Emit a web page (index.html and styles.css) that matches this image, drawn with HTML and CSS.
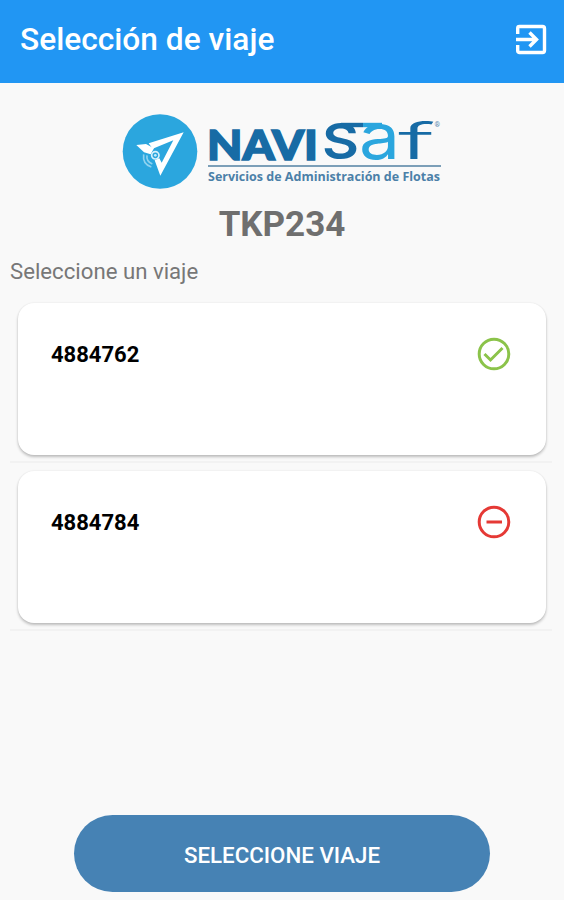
FILE: index.html
```html
<!DOCTYPE html>
<html lang="es">
<head>
<meta charset="utf-8">
<title>Selección de viaje</title>
<link rel="stylesheet" href="styles.css">
</head>
<body>
<header class="bar">
  <h1 class="bar-title">Selección de viaje</h1>
  <svg class="exit" viewBox="0 0 32 32" fill="none" stroke="currentColor" stroke-width="3.4">
    <path d="M2.7 10V4.2Q2.7 2.5 4.5 2.5H27.5Q29.5 2.5 29.5 4.5V26.5Q29.5 28.5 27.5 28.5H4.5Q2.7 28.5 2.7 26.8V21"/>
    <path d="M1 15.5H21M14.5 8.5L21.5 15.5L14.5 22.5"/>
  </svg>
</header>
<main class="page">
  <svg class="logo" viewBox="0 0 320 78" role="img">
    <circle cx="38" cy="38.5" r="37.3" fill="#2ba6de"/>
    <g transform="scale(.33333)">
      <path fill="#fff" d="M185 58L115 188L98 142L112 136L119 149L154 82L92 107L80 91Z"/>
      <path fill="#fff" d="M43 96L72 93L96 106L86 124L66 118Z"/>
      <circle cx="100" cy="127" r="11" fill="#2ba6de" stroke="#d8f1fb" stroke-width="5"/>
      <circle cx="100" cy="127" r="4" fill="#c5eafa"/>
      <path d="M75 127Q72 145 91 153M65 124Q61 153 88 162" fill="none" stroke="#8fd2ef" stroke-width="5"/>
    </g>
    <text class="navi" x="85" y="46.5" textLength="111" lengthAdjust="spacingAndGlyphs">NAVI</text>
    <g class="saf">
      <text x="200" y="45.5" textLength="37" lengthAdjust="spacingAndGlyphs" fill="#176ba5">S</text>
      <text class="saf-a" x="237" y="45.5" textLength="41" lengthAdjust="spacingAndGlyphs" fill="#2ba6de">a</text>
      <text class="saf-f" x="276" y="45.5" textLength="37" lengthAdjust="spacingAndGlyphs" fill="#176ba5">f</text>
    </g>
    <path d="M219 12H241" stroke="#176ba5" stroke-width="4.4"/>
    <path d="M241 12H260" stroke="#2ba6de" stroke-width="4.4"/>
    <text class="reg" x="312.5" y="14">®</text>
    <path d="M86 53H319" stroke="#7c9fb8" stroke-width="2"/>
    <text class="tagline" x="86" y="68" textLength="232" lengthAdjust="spacingAndGlyphs">Servicios de Administración de Flotas</text>
  </svg>
  <h2 class="plate">TKP234</h2>
  <p class="hint">Seleccione un viaje</p>
  <ul class="trips">
    <li class="trip">
      <div class="card">
        <span>4884762</span>
        <svg class="status ok" viewBox="0 0 34 34"><circle cx="17" cy="17" r="14.8"/><path d="M7.5 17L13.5 23L25.5 11"/></svg>
      </div>
    </li>
    <li class="trip">
      <div class="card">
        <span>4884784</span>
        <svg class="status no" viewBox="0 0 34 34"><circle cx="17" cy="17" r="14.8"/><path d="M9.5 17H25"/></svg>
      </div>
    </li>
  </ul>
  <button class="select">SELECCIONE VIAJE</button>
</main>
</body>
</html>
```
FILE: styles.css
```css
* { box-sizing: border-box; }
body {
  margin: 0;
  height: 900px;
  display: flex;
  flex-direction: column;
  background: #f9f9f9;
  font-family: Roboto, "Liberation Sans", sans-serif;
}
.bar {
  height: 83px;
  flex: none;
  display: flex;
  align-items: center;
  justify-content: space-between;
  padding: 0 17px 4px 20px;
  background: #2196f3;
  color: #fff;
}
.bar-title { margin: 0; font-size: 31.7px; font-weight: 500; }
.exit { width: 32px; height: 32px; }
.page {
  flex: 1;
  display: flex;
  flex-direction: column;
  padding: 30px 10px 8px;
}
.logo { width: 320px; height: 78px; margin-left: 112px; flex: none; overflow: visible; }
.navi { font: 900 42.5px Lato, sans-serif; fill: #176ba5; stroke: #176ba5; stroke-width: 1.6; }
.saf { font-family: Inter, sans-serif; font-weight: 600; font-size: 49px; }
.saf-a { font-size: 64px; font-weight: 400; }
.saf-f { font-size: 49px; font-weight: 300; }
.reg { font: 700 7px Roboto, sans-serif; fill: #5f8fb3; }
.tagline { font: 700 11.5px "Open Sans", sans-serif; fill: #4b80a8; }
.plate {
  margin: 13px 0 0;
  line-height: 42px;
  font-size: 35px;
  font-weight: 700;
  color: #6f6f6f;
  text-align: center;
}
.hint { margin: 12px 0 0; line-height: 26px; font-size: 22.2px; color: #777; }
.trips { list-style: none; margin: 19px 2px 0 0; padding: 0; }
.trip { height: 168px; padding: 0 6px 0 8px; border-bottom: 2px solid #f2f2f2; }
.trip:first-child { height: 160px; }
.trip + .trip { padding-top: 8px; }
.card {
  height: 152px;
  padding: 34px 35px 0 33px;
  display: flex;
  align-items: flex-start;
  justify-content: space-between;
  border-radius: 16px;
  background: #fff;
  box-shadow: 0 2px 3px rgba(0, 0, 0, .24), 0 0 2px rgba(0, 0, 0, .08);
  font-size: 22px;
  font-weight: 700;
  line-height: 35px;
  color: #000;
}
.status { width: 34px; height: 34px; fill: none; stroke-width: 3; }
.ok { stroke: #8bc34a; }
.no { stroke: #e53935; }
.select {
  width: 416px;
  height: 77px;
  margin: auto 0 0 64px;
  padding-top: 3px;
  border: 0;
  border-radius: 39px;
  background: #4682b4;
  color: #fff;
  font: 500 22.3px Roboto, sans-serif;
}
```
